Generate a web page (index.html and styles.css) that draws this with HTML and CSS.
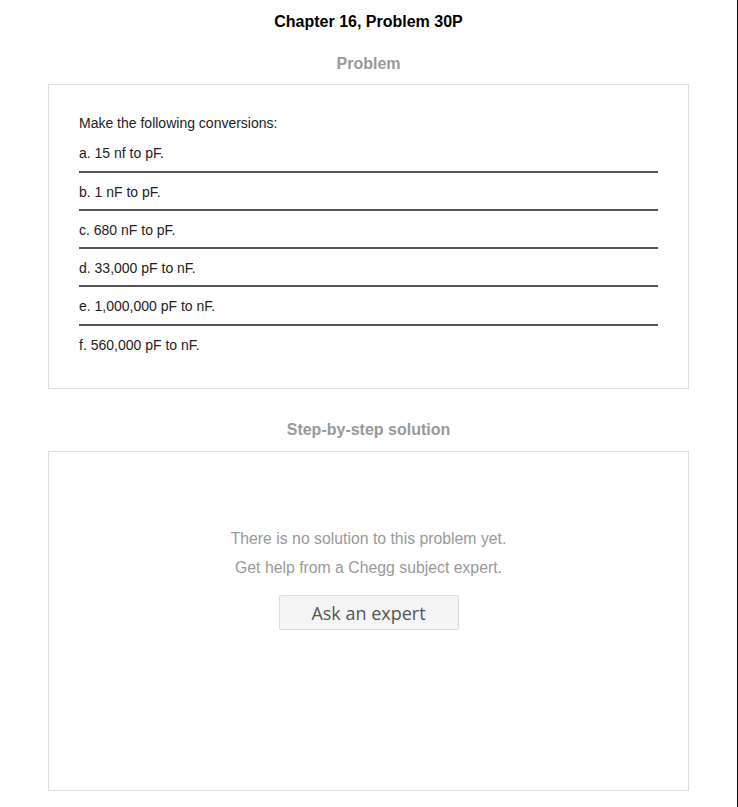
FILE: index.html
```html
<!DOCTYPE html>
<html>
<head>
<meta charset="utf-8">
<link rel="stylesheet" href="styles.css">
</head>
<body>
<div class="page">
  <h1 class="title">Chapter 16, Problem 30P</h1>
  <h2 class="section-title first">Problem</h2>
  <div class="box problem">
    <p class="intro">Make the following conversions:</p>
    <div class="item">a. 15 nf to pF.</div>
    <div class="item">b. 1 nF to pF.</div>
    <div class="item">c. 680 nF to pF.</div>
    <div class="item">d. 33,000 pF to nF.</div>
    <div class="item">e. 1,000,000 pF to nF.</div>
    <div class="item last">f. 560,000 pF to nF.</div>
  </div>
  <h2 class="section-title second">Step-by-step solution</h2>
  <div class="box solution">
    <p class="msg">There is no solution to this problem yet.</p>
    <p class="msg">Get help from a Chegg subject expert.</p>
    <button class="ask">Ask an expert</button>
  </div>
</div>
</body>
</html>
```

FILE: styles.css
```css
html, body {
  margin: 0;
  padding: 0;
  background: #fff;
}
.page {
  width: 737px;
  min-height: 807px;
  border-right: 1px solid #000;
  font-family: "Liberation Sans", Arial, sans-serif;
  display: flex;
  flex-direction: column;
  align-items: center;
}
.title {
  margin: 0;
  padding-top: 12px;
  font-size: 16px;
  line-height: 20px;
  font-weight: bold;
  color: #000;
}
.section-title {
  margin: 0;
  font-size: 16px;
  line-height: 20px;
  font-weight: bold;
  color: #999;
}
.section-title.first {
  margin-top: 22px;
  margin-bottom: 10px;
}
.section-title.second {
  margin-top: 31px;
  margin-bottom: 11px;
}
.box {
  box-sizing: border-box;
  width: 641px;
  border: 1px solid #ddd;
}
.problem {
  padding: 30px 30px 26px;
  font-size: 14px;
  line-height: 17.29px;
  color: #222;
}
.intro {
  margin: 0 0 2px;
}
.item {
  padding: 11px 0 8px;
  border-bottom: 2px solid #555;
}
.item.last {
  border-bottom: none;
}
.solution {
  height: 340px;
  padding-top: 72px;
  display: flex;
  flex-direction: column;
  align-items: center;
}
.msg {
  margin: 0;
  font-size: 15.8px;
  line-height: 29px;
  color: #999;
}
.ask {
  margin-top: 13px;
  box-sizing: border-box;
  width: 180px;
  height: 35px;
  background: #f5f5f5;
  border: 1px solid #ddd;
  border-radius: 2px;
  font-family: "Open Sans", sans-serif;
  font-size: 18px;
  color: #555;
  padding: 0;
}
```
